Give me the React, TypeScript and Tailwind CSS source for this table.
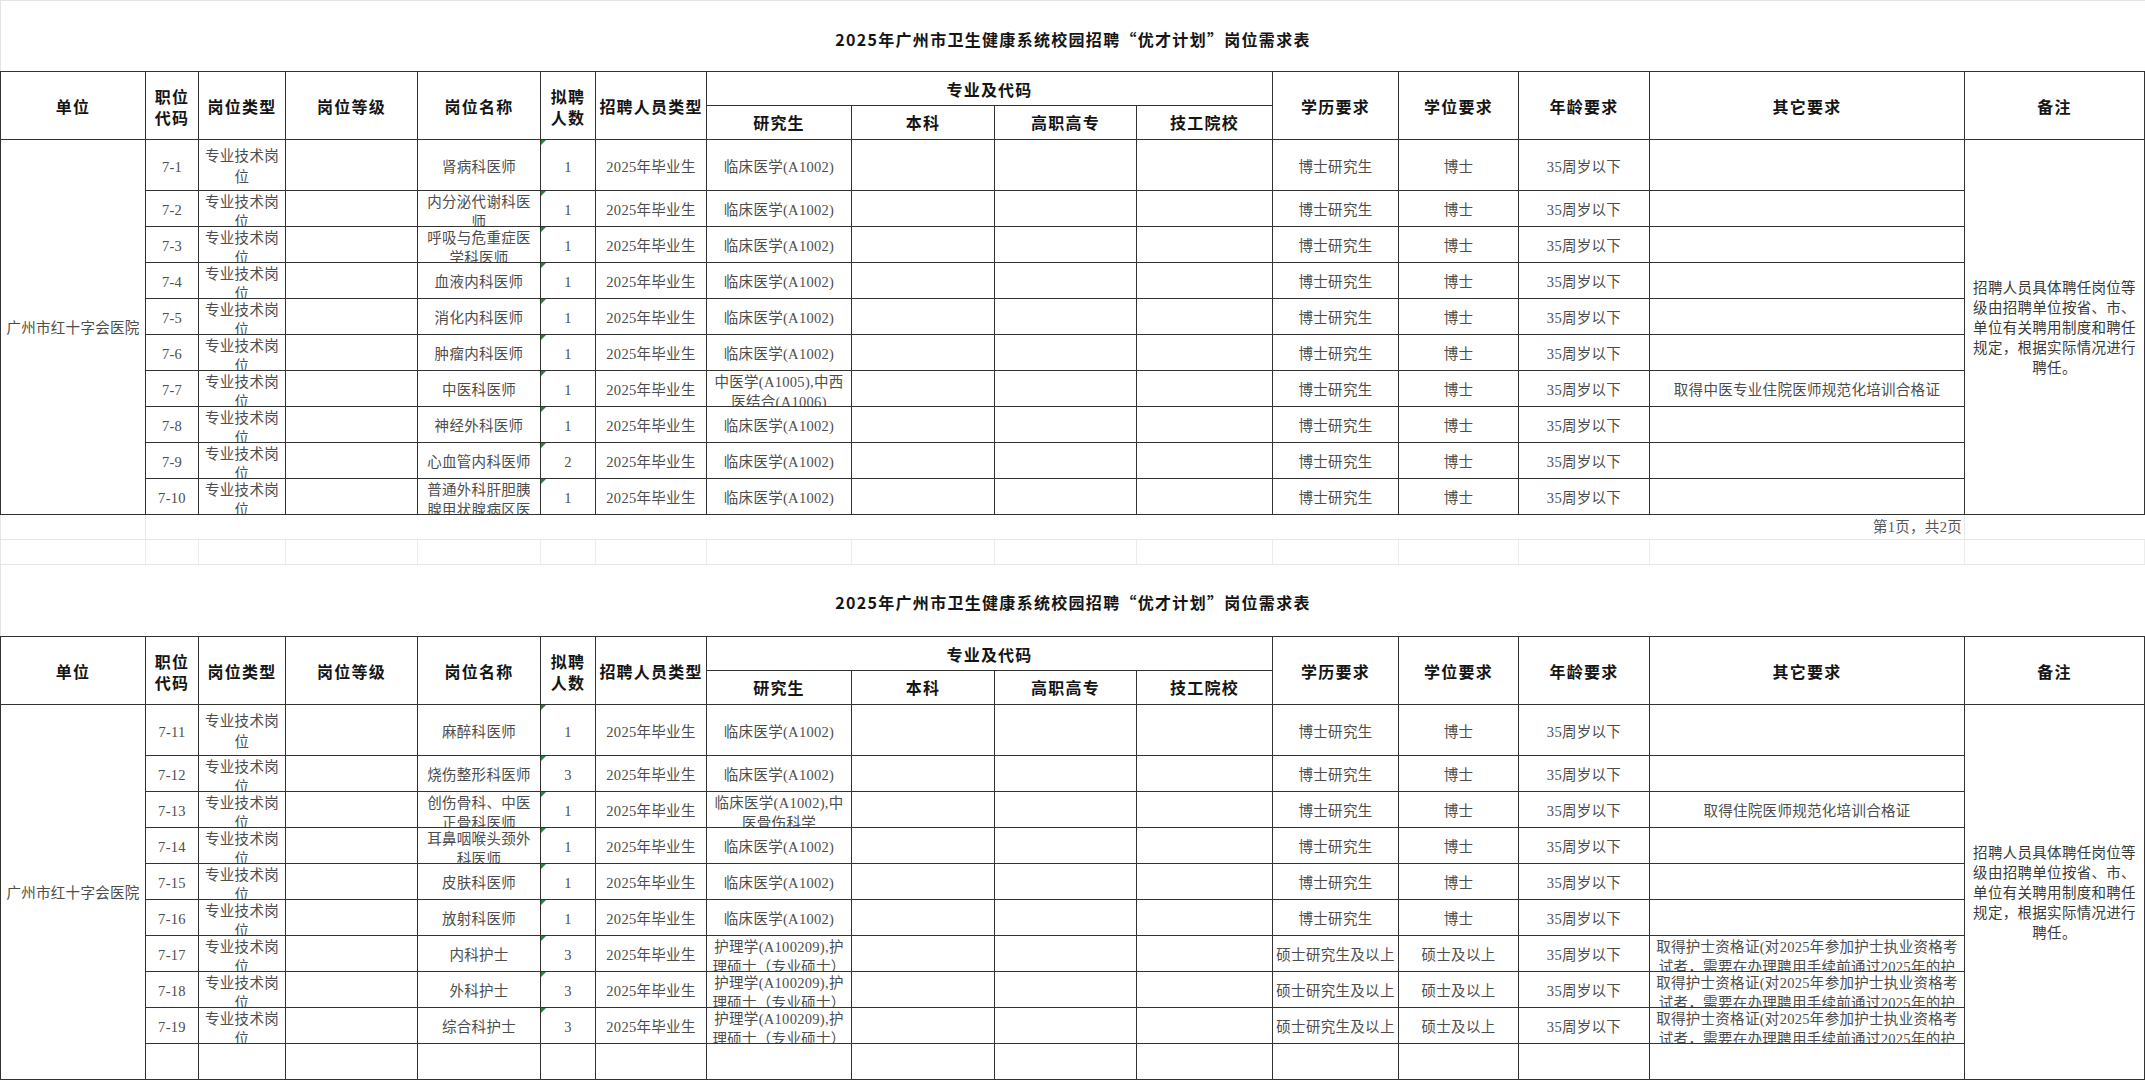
import React from "react";

type Row = {
  code: string;
  name: string[];
  n: string;
  major: string[];
  edu: string;
  deg: string;
  other: string[];
};

const A = "临床医学(A1002)";
const NURSE_MAJOR = ["护理学(A100209),护", "理硕士（专业硕士）"];
const NURSE_OTHER = [
  "取得护士资格证(对2025年参加护士执业资格考",
  "试者，需要在办理聘用手续前通过2025年的护",
];

const table1: Row[] = [
  { code: "7-1", name: ["肾病科医师"], n: "1", major: [A], edu: "博士研究生", deg: "博士", other: [] },
  { code: "7-2", name: ["内分泌代谢科医", "师"], n: "1", major: [A], edu: "博士研究生", deg: "博士", other: [] },
  { code: "7-3", name: ["呼吸与危重症医", "学科医师"], n: "1", major: [A], edu: "博士研究生", deg: "博士", other: [] },
  { code: "7-4", name: ["血液内科医师"], n: "1", major: [A], edu: "博士研究生", deg: "博士", other: [] },
  { code: "7-5", name: ["消化内科医师"], n: "1", major: [A], edu: "博士研究生", deg: "博士", other: [] },
  { code: "7-6", name: ["肿瘤内科医师"], n: "1", major: [A], edu: "博士研究生", deg: "博士", other: [] },
  {
    code: "7-7",
    name: ["中医科医师"],
    n: "1",
    major: ["中医学(A1005),中西", "医结合(A1006)"],
    edu: "博士研究生",
    deg: "博士",
    other: ["取得中医专业住院医师规范化培训合格证"],
  },
  { code: "7-8", name: ["神经外科医师"], n: "1", major: [A], edu: "博士研究生", deg: "博士", other: [] },
  { code: "7-9", name: ["心血管内科医师"], n: "2", major: [A], edu: "博士研究生", deg: "博士", other: [] },
  { code: "7-10", name: ["普通外科肝胆胰", "腺甲状腺病区医", "师"], n: "1", major: [A], edu: "博士研究生", deg: "博士", other: [] },
];

const table2: Row[] = [
  { code: "7-11", name: ["麻醉科医师"], n: "1", major: [A], edu: "博士研究生", deg: "博士", other: [] },
  { code: "7-12", name: ["烧伤整形科医师"], n: "3", major: [A], edu: "博士研究生", deg: "博士", other: [] },
  {
    code: "7-13",
    name: ["创伤骨科、中医", "正骨科医师"],
    n: "1",
    major: ["临床医学(A1002),中", "医骨伤科学"],
    edu: "博士研究生",
    deg: "博士",
    other: ["取得住院医师规范化培训合格证"],
  },
  { code: "7-14", name: ["耳鼻咽喉头颈外", "科医师"], n: "1", major: [A], edu: "博士研究生", deg: "博士", other: [] },
  { code: "7-15", name: ["皮肤科医师"], n: "1", major: [A], edu: "博士研究生", deg: "博士", other: [] },
  { code: "7-16", name: ["放射科医师"], n: "1", major: [A], edu: "博士研究生", deg: "博士", other: [] },
  { code: "7-17", name: ["内科护士"], n: "3", major: NURSE_MAJOR, edu: "硕士研究生及以上", deg: "硕士及以上", other: NURSE_OTHER },
  { code: "7-18", name: ["外科护士"], n: "3", major: NURSE_MAJOR, edu: "硕士研究生及以上", deg: "硕士及以上", other: NURSE_OTHER },
  { code: "7-19", name: ["综合科护士"], n: "3", major: NURSE_MAJOR, edu: "硕士研究生及以上", deg: "硕士及以上", other: NURSE_OTHER },
];

const NOTE = [
  "招聘人员具体聘任岗位等",
  "级由招聘单位按省、市、",
  "单位有关聘用制度和聘任",
  "规定，根据实际情况进行",
  "聘任。",
];

function Cell({
  lines = [],
  tall = false,
  tri = false,
}: {
  lines?: string[];
  tall?: boolean;
  tri?: boolean;
}) {
  const top = lines.length > 1 && !tall;
  return (
    <div
      className={
        top
          ? "relative overflow-hidden border-r border-b border-[#333] flex flex-col items-center justify-start pt-[1px] leading-[20px]"
          : "relative overflow-hidden border-r border-b border-[#333] flex flex-col items-center justify-center pt-[4px] leading-[21px]"
      }
    >
      {tri && (
        <div className="absolute top-0 left-0 w-0 h-0 border-t-[5px] border-r-[5px] border-t-[#1f8a3a] border-r-transparent" />
      )}
      {lines.map((l, i) => (
        <div key={i} className="whitespace-nowrap">
          {l}
        </div>
      ))}
    </div>
  );
}

function HeadCell({
  lines,
  span,
}: {
  lines: string[];
  span: "row" | "col" | "none";
}) {
  const base =
    "border-r border-b border-[#333] flex flex-col items-center justify-center leading-[21px] font-bold text-[16px] tracking-[1.2px] text-[#151515] overflow-hidden";
  const cls =
    span === "row"
      ? base + " row-span-2 pt-[4px]"
      : span === "col"
      ? base + " col-span-4 pt-[3px]"
      : base + " pt-[2px]";
  return (
    <div className={cls}>
      {lines.map((l, i) => (
        <div key={i} className="whitespace-nowrap">
          {l}
        </div>
      ))}
    </div>
  );
}

function DataTable({ rows, emptyRow }: { rows: Row[]; emptyRow: boolean }) {
  return (
    <div className="grid grid-cols-[145px_53px_87px_132px_123px_55px_111px_145px_143px_142px_136px_126px_120px_131px_315px_180px] grid-rows-[34px_34px_51px_repeat(9,36px)] border-t border-l border-[#333] text-[14.5px] tracking-[0.3px] text-[#4d4d4d]">
      <HeadCell lines={["单位"]} span="row" />
      <HeadCell lines={["职位", "代码"]} span="row" />
      <HeadCell lines={["岗位类型"]} span="row" />
      <HeadCell lines={["岗位等级"]} span="row" />
      <HeadCell lines={["岗位名称"]} span="row" />
      <HeadCell lines={["拟聘", "人数"]} span="row" />
      <HeadCell lines={["招聘人员类型"]} span="row" />
      <HeadCell lines={["专业及代码"]} span="col" />
      <HeadCell lines={["学历要求"]} span="row" />
      <HeadCell lines={["学位要求"]} span="row" />
      <HeadCell lines={["年龄要求"]} span="row" />
      <HeadCell lines={["其它要求"]} span="row" />
      <HeadCell lines={["备注"]} span="row" />
      <HeadCell lines={["研究生"]} span="none" />
      <HeadCell lines={["本科"]} span="none" />
      <HeadCell lines={["高职高专"]} span="none" />
      <HeadCell lines={["技工院校"]} span="none" />

      {rows.map((r, i) => (
        <React.Fragment key={r.code}>
          {i === 0 && (
            <div className="row-span-10 border-r border-b border-[#333] flex items-center justify-center pt-[4px] whitespace-nowrap">
              广州市红十字会医院
            </div>
          )}
          <Cell lines={[r.code]} tall={i === 0} />
          <Cell lines={["专业技术岗", "位"]} tall={i === 0} />
          <Cell />
          <Cell lines={r.name} tall={i === 0} />
          <Cell lines={[r.n]} tall={i === 0} tri />
          <Cell lines={["2025年毕业生"]} tall={i === 0} />
          <Cell lines={r.major} tall={i === 0} />
          <Cell />
          <Cell />
          <Cell />
          <Cell lines={[r.edu]} tall={i === 0} />
          <Cell lines={[r.deg]} tall={i === 0} />
          <Cell lines={["35周岁以下"]} tall={i === 0} />
          <Cell lines={r.other} tall={i === 0} />
          {i === 0 && (
            <div className="row-span-10 border-r border-b border-[#333] flex flex-col items-center justify-center pt-[2px] leading-[20px] text-[#3a3a3a]">
              {NOTE.map((l, k) => (
                <div key={k} className="whitespace-nowrap">
                  {l}
                </div>
              ))}
            </div>
          )}
        </React.Fragment>
      ))}
      {emptyRow &&
        Array.from({ length: 14 }).map((_, k) => <Cell key={"e" + k} />)}
    </div>
  );
}

function Title() {
  return (
    <div
      lang="zh-CN"
      className="text-[16px] font-bold tracking-[1.3px] text-[#151515] whitespace-nowrap font-['Noto_Sans_CJK_SC',sans-serif]"
    >
      2025年广州市卫生健康系统校园招聘“优才计划”岗位需求表
    </div>
  );
}

export default function App() {
  const faintCols = Array.from({ length: 16 });
  return (
    <div className="w-[2145px] h-[1080px] overflow-hidden bg-white font-['Liberation_Serif','Noto_Sans_CJK_SC',serif]">
      <div className="h-[71px] border-t border-l border-[#e4e4e4] flex items-center justify-center pt-[5px]">
        <Title />
      </div>

      <DataTable rows={table1} emptyRow={false} />

      <div className="grid grid-cols-[145px_1819px_180px] h-[25px] border-l border-b border-[#e6e6e6] text-[14.5px] tracking-[0.3px] text-[#555]">
        <div className="border-r border-[#e6e6e6]" />
        <div className="border-r border-[#e6e6e6] flex items-center justify-end pr-[2px] pt-[1px] whitespace-nowrap">
          第1页，共2页
        </div>
        <div />
      </div>
      <div className="grid grid-cols-[145px_53px_87px_132px_123px_55px_111px_145px_143px_142px_136px_126px_120px_131px_315px_180px] h-[25px] border-l border-b border-[#e6e6e6]">
        {faintCols.map((_, k) => (
          <div key={k} className="border-r border-[#ececec]" />
        ))}
      </div>

      <div className="h-[71px] border-l border-[#e4e4e4] flex items-center justify-center pt-[3px]">
        <Title />
      </div>

      <DataTable rows={table2} emptyRow />
    </div>
  );
}
